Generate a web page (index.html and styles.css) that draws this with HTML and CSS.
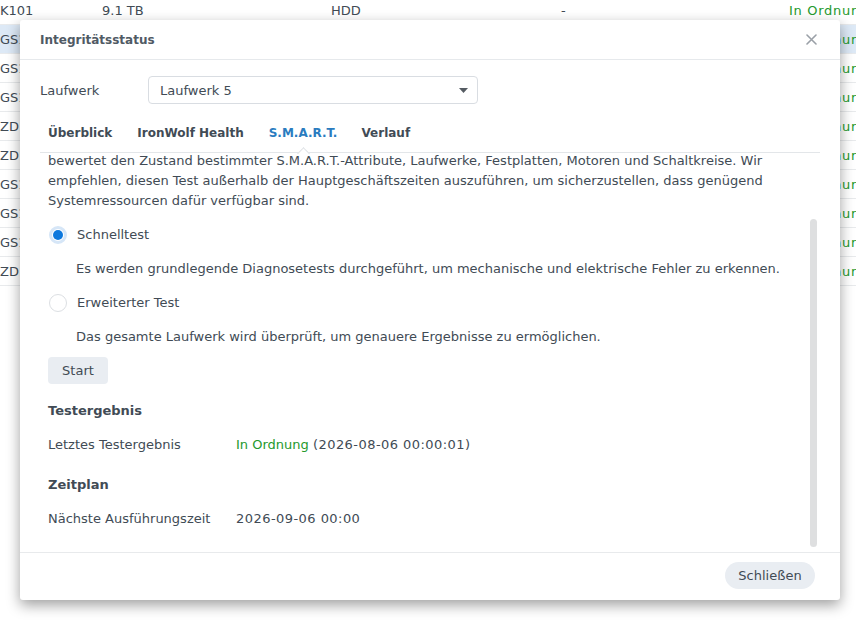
FILE: index.html
```html
<!DOCTYPE html>
<html lang="de">
<head>
<meta charset="utf-8">
<title>Integritätsstatus</title>
<link rel="stylesheet" href="styles.css">
</head>
<body>
<div class="bg-table">
  <div class="row"><span class="c1">K101</span><span class="c2">9.1 TB</span><span class="c3">HDD</span><span class="c4">-</span><span class="c5 ok">In Ordnung</span></div>
  <div class="row sel"><span class="c1">GS1</span><span class="c5 ok">In Ordnung</span></div>
  <div class="row"><span class="c1">GS1</span><span class="c5 ok">In Ordnung</span></div>
  <div class="row"><span class="c1">GS1</span><span class="c5 ok">In Ordnung</span></div>
  <div class="row"><span class="c1">ZD1</span><span class="c5 ok">In Ordnung</span></div>
  <div class="row"><span class="c1">ZD1</span><span class="c5 ok">In Ordnung</span></div>
  <div class="row"><span class="c1">GS1</span><span class="c5 ok">In Ordnung</span></div>
  <div class="row"><span class="c1">GS1</span><span class="c5 ok">In Ordnung</span></div>
  <div class="row"><span class="c1">GS1</span><span class="c5 ok">In Ordnung</span></div>
  <div class="row"><span class="c1">ZD1</span><span class="c5 ok">In Ordnung</span></div>
</div>

<div class="dialog">
  <div class="dlg-header">
    <span class="dlg-title">Integritätsstatus</span>
    <svg class="dlg-close" width="11" height="11" viewBox="0 0 11 11"><path d="M1 1 L10 10 M10 1 L1 10" stroke="#9aa0a7" stroke-width="1.6" stroke-linecap="round" fill="none"/></svg>
  </div>
  <div class="dlg-body">
    <div class="field">
      <span class="field-label">Laufwerk</span>
      <div class="select">
        <span>Laufwerk 5</span>
        <svg class="caret" width="9" height="5" viewBox="0 0 9 5"><path d="M0 0 L9 0 L4.5 5 Z" fill="#555b62"/></svg>
      </div>
    </div>
    <div class="tabs">
      <span class="tab">Überblick</span>
      <span class="tab">IronWolf Health</span>
      <span class="tab active">S.M.A.R.T.</span>
      <span class="tab">Verlauf</span>
    </div>
    <div class="content">
      <p class="intro">bewertet den Zustand bestimmter S.M.A.R.T.-Attribute, Laufwerke, Festplatten, Motoren und Schaltkreise. Wir<br>empfehlen, diesen Test außerhalb der Hauptgeschäftszeiten auszuführen, um sicherzustellen, dass genügend<br>Systemressourcen dafür verfügbar sind.</p>
      <div class="radio-row"><span class="radio checked"></span><span>Schnelltest</span></div>
      <div class="desc">Es werden grundlegende Diagnosetests durchgeführt, um mechanische und elektrische Fehler zu erkennen.</div>
      <div class="radio-row"><span class="radio"></span><span>Erweiterter Test</span></div>
      <div class="desc">Das gesamte Laufwerk wird überprüft, um genauere Ergebnisse zu ermöglichen.</div>
      <button class="btn">Start</button>
      <div class="section">Testergebnis</div>
      <div class="kv"><span class="k">Letztes Testergebnis</span><span><span class="ok">In Ordnung</span> <span class="num">(2026-08-06 00:00:01)</span></span></div>
      <div class="section sec2">Zeitplan</div>
      <div class="kv"><span class="k">Nächste Ausführungszeit</span><span class="num">2026-09-06 00:00</span></div>
      <div class="scrollbar"></div>
    </div>
  </div>
  <div class="dlg-footer">
    <button class="btn pill">Schließen</button>
  </div>
</div>
</body>
</html>
```

FILE: styles.css
```css
* { box-sizing: border-box; }
html, body { margin: 0; padding: 0; }
body {
  width: 856px;
  height: 629px;
  overflow: hidden;
  background: #ffffff;
  font-family: "DejaVu Sans", Verdana, sans-serif;
  font-size: 13px;
  color: #414b55;
  position: relative;
}

/* background table */
.bg-table { margin-top: -4px; }
.row {
  height: 29px;
  display: flex;
  align-items: center;
  border-bottom: 1px solid #e8eaec;
  white-space: nowrap;
  position: relative;
}
.row.sel { background: #dde9f6; }
.row span { position: absolute; }
.c1 { left: 0; }
.c2 { left: 102px; }
.c3 { left: 331px; }
.c4 { left: 561px; }
.c5 { left: 789px; letter-spacing: 0.7px; }
.ok { color: #24992d; }

/* dialog */
.dialog {
  position: absolute;
  left: 20px;
  top: 20px;
  width: 820px;
  height: 580px;
  background: #ffffff;
  border-radius: 3px;
  box-shadow: 0 5px 14px rgba(0, 0, 0, 0.38);
  display: flex;
  flex-direction: column;
}
.dlg-header {
  height: 40px;
  flex: none;
  display: flex;
  align-items: center;
  justify-content: space-between;
  padding: 0 23px 0 20px;
  border-bottom: 1px solid #e6e9ec;
}
.dlg-title {
  font-weight: bold;
  font-size: 12px;
  color: #505a64;
}
.dlg-body {
  flex: 1;
  display: flex;
  flex-direction: column;
  padding: 0 20px;
  min-height: 0;
}
.field {
  display: flex;
  align-items: center;
  margin-top: 16px;
}
.field-label { width: 108px; }
.select {
  width: 330px;
  height: 28px;
  border: 1px solid #d9dde2;
  border-radius: 4px;
  display: flex;
  align-items: center;
  justify-content: space-between;
  padding: 0 9px 0 11px;
}
.tabs {
  display: flex;
  gap: 24px;
  margin-top: 19px;
  padding: 0 8px 9px;
  border-bottom: 1px solid #e3e6e9;
  line-height: 20px;
}
.tab {
  font-weight: bold;
  font-size: 12px;
  color: #414b55;
  position: relative;
}
.tab:nth-child(2) { margin-left: 1px; }
.tab.active { color: #2a7cbf; margin-left: 1px; }
.tab.active::after {
  content: "";
  position: absolute;
  left: 50%;
  bottom: -15px;
  width: 8px;
  height: 8px;
  margin-left: -4px;
  background: #ffffff;
  border-left: 1px solid #dfe2e5;
  border-top: 1px solid #dfe2e5;
  transform: rotate(45deg);
}
.content {
  flex: 1;
  overflow: hidden;
  position: relative;
  padding: 0 0 0 8px;
  line-height: 20px;
}
.intro { margin: -2px 0 0; }
.radio-row {
  display: flex;
  align-items: center;
  margin-top: 14px;
}
.radio {
  width: 18px;
  height: 18px;
  border-radius: 50%;
  border: 1px solid #dcdfe3;
  background: #fff;
  margin: 0 10px 0 1px;
  position: relative;
}
.radio.checked {
  border-color: #d6e6f7;
  border-width: 3px;
}
.radio.checked::after {
  content: "";
  position: absolute;
  left: 1px;
  top: 1px;
  width: 10px;
  height: 10px;
  border-radius: 50%;
  background: #0d78dd;
}
.desc {
  margin-top: 14px;
  padding-left: 28px;
}
.btn {
  font-family: inherit;
  font-size: 13px;
  color: #414b55;
  background: #e9edf2;
  border: none;
  border-radius: 4px;
  height: 27px;
  padding: 0 14px;
  cursor: pointer;
}
.content .btn {
  margin-top: 10px;
  display: block;
  width: 60px;
}
.section {
  font-weight: bold;
  margin-top: 17px;
}
.section.sec2 { margin-top: 20px; }
.kv {
  display: flex;
  margin-top: 14px;
}
.k { width: 188px; }
.num { letter-spacing: 0.45px; }
.scrollbar {
  position: absolute;
  right: 3px;
  top: 66px;
  width: 7px;
  height: 328px;
  border-radius: 4px;
  background: #dedfe0;
}
.dlg-footer {
  height: 48px;
  flex: none;
  border-top: 1px solid #e8eaec;
  display: flex;
  align-items: center;
  justify-content: flex-end;
  padding: 0 25px 2px 0;
}
.btn.pill {
  border-radius: 14px;
  padding: 0 13px;
  width: 90px;
}
```
